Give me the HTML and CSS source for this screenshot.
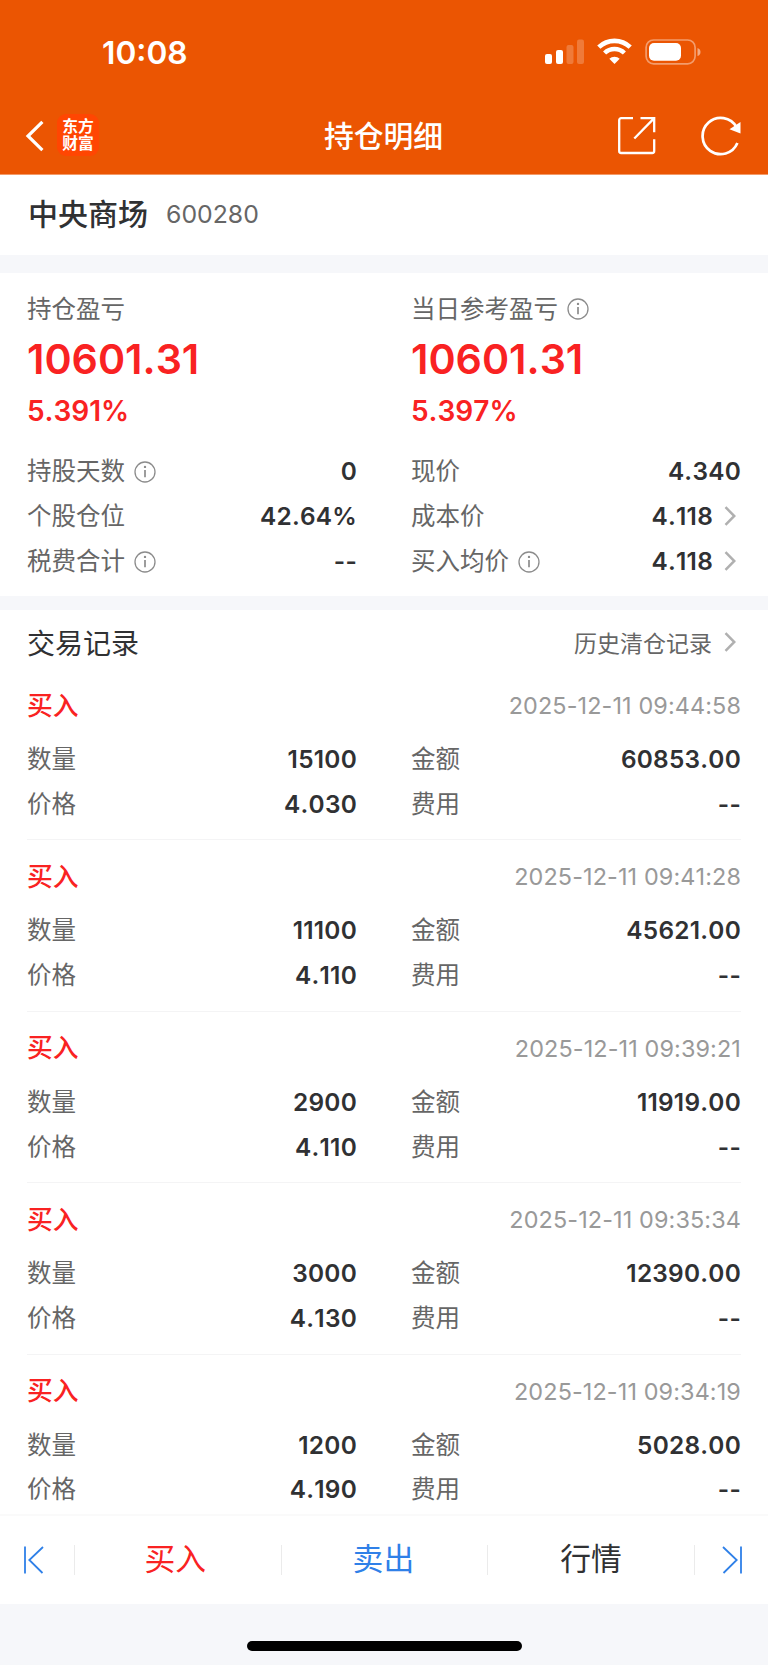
FILE: index.html
```html
<!DOCTYPE html>
<html lang="zh-CN">
  <head>
    <meta charset="UTF-8" />
    <meta name="viewport" content="width=device-width, initial-scale=1.0" />
    <title>持仓明细</title>
    <link rel="stylesheet" href="styles.css">
  </head>
  <body>
    <svg class="defs" width="0" height="0">
      <symbol id="info" viewBox="0 0 22 22">
        <circle cx="11" cy="11" r="10" fill="none" stroke="#8c8c8c" stroke-width="1.3" />
        <path d="M11 9v7.2" stroke="#8c8c8c" stroke-width="1.7" />
        <circle cx="11" cy="5.9" r="1.2" fill="#8c8c8c" />
      </symbol>
      <symbol id="arrow" viewBox="0 0 12 20">
        <path d="M1.5 1.2L10.3 10L1.5 18.8" fill="none" stroke="#b0b0b0" stroke-width="2.5" />
      </symbol>
    </svg>

    <div class="page">
      <header class="header">
        <div class="status-bar">
          <div class="time">10:08</div>
          <svg class="status-icons" width="158" height="28" viewBox="0 0 158 28">
            <rect x="1" y="16" width="7" height="10" rx="2" fill="#fff" />
            <rect x="12" y="12" width="7" height="14" rx="2" fill="#fff" />
            <rect x="22.5" y="7" width="7" height="19" rx="2" fill="#fff" fill-opacity="0.22" />
            <rect x="33" y="1.5" width="7" height="24.5" rx="2" fill="#fff" fill-opacity="0.22" />
            <path d="M54.8 9.2A22.6 22.6 0 0 1 86.2 9.2" fill="none" stroke="#fff" stroke-width="4.6" />
            <path d="M60.6 15A14.2 14.2 0 0 1 80.4 15" fill="none" stroke="#fff" stroke-width="4.4" />
            <path d="M70.5 26L65.3 20.8A7.6 7.6 0 0 1 75.7 20.8Z" fill="#fff" />
            <rect x="102.1" y="2" width="49" height="23.8" rx="7.5" fill="none" stroke="#fff" stroke-opacity="0.42" stroke-width="1.7" />
            <rect x="105" y="5" width="32" height="17.8" rx="5" fill="#fff" />
            <path d="M153.5 10Q156.5 11 156.5 14T153.5 18Z" fill="#fff" fill-opacity="0.5" />
          </svg>
        </div>
        <div class="nav">
          <div class="nav-left">
            <svg width="20" height="32" viewBox="0 0 20 32">
              <path d="M17.4 1.8L3 16L17.4 30.2" fill="none" stroke="#fff" stroke-width="3.2" />
            </svg>
            <div class="logo"><span>东方</span><span>财富</span></div>
          </div>
          <h1>持仓明细</h1>
          <div class="nav-right">
            <svg width="40" height="40" viewBox="0 0 40 40">
              <path d="M16 2.2H4.2a2 2 0 0 0-2 2V35a2 2 0 0 0 2 2H35.2a2 2 0 0 0 2-2V23.3M23.5 2.2H37.2V16.3M37 2.4L17.3 22.5" fill="none" stroke="#fff" stroke-width="2.3" />
            </svg>
            <svg width="42" height="40" viewBox="0 0 42 40">
              <path d="M37.4 27A18.1 18.1 0 1 1 36.5 11.2" fill="none" stroke="#fff" stroke-width="2.7" />
              <path d="M40.5 6V17.5L29.5 13.3Z" fill="#fff" />
            </svg>
          </div>
        </div>
      </header>

      <section class="stock">
        <span class="stock-name">中央商场</span>
        <span class="stock-code">600280</span>
      </section>

      <section class="summary">
        <div class="col">
          <div class="label">持仓盈亏</div>
          <div class="profit">10601.31</div>
          <div class="percent">5.391%</div>
          <div class="row"><span class="label">持股天数<svg class="info"><use href="#info" /></svg></span><b>0</b></div>
          <div class="row"><span class="label">个股仓位</span><b>42.64%</b></div>
          <div class="row"><span class="label">税费合计<svg class="info"><use href="#info" /></svg></span><b>--</b></div>
        </div>
        <div class="col">
          <div class="label">当日参考盈亏<svg class="info"><use href="#info" /></svg></div>
          <div class="profit">10601.31</div>
          <div class="percent">5.397%</div>
          <div class="row"><span class="label">现价</span><b>4.340</b></div>
          <div class="row"><span class="label">成本价</span><b>4.118<svg class="arrow"><use href="#arrow" /></svg></b></div>
          <div class="row"><span class="label">买入均价<svg class="info"><use href="#info" /></svg></span><b>4.118<svg class="arrow"><use href="#arrow" /></svg></b></div>
        </div>
      </section>

      <section class="records">
        <div class="records-title">
          <h2>交易记录</h2>
          <a class="history">历史清仓记录<svg class="arrow"><use href="#arrow" /></svg></a>
        </div>

        <div class="record">
          <div class="record-head"><span class="buy">买入</span><span class="date">2025-12-11 09:44:58</span></div>
          <div class="record-grid">
            <div class="row"><span class="label">数量</span><b>15100</b></div>
            <div class="row"><span class="label">金额</span><b>60853.00</b></div>
            <div class="row"><span class="label">价格</span><b>4.030</b></div>
            <div class="row"><span class="label">费用</span><b>--</b></div>
          </div>
        </div>

        <div class="record">
          <div class="record-head"><span class="buy">买入</span><span class="date">2025-12-11 09:41:28</span></div>
          <div class="record-grid">
            <div class="row"><span class="label">数量</span><b>11100</b></div>
            <div class="row"><span class="label">金额</span><b>45621.00</b></div>
            <div class="row"><span class="label">价格</span><b>4.110</b></div>
            <div class="row"><span class="label">费用</span><b>--</b></div>
          </div>
        </div>

        <div class="record">
          <div class="record-head"><span class="buy">买入</span><span class="date">2025-12-11 09:39:21</span></div>
          <div class="record-grid">
            <div class="row"><span class="label">数量</span><b>2900</b></div>
            <div class="row"><span class="label">金额</span><b>11919.00</b></div>
            <div class="row"><span class="label">价格</span><b>4.110</b></div>
            <div class="row"><span class="label">费用</span><b>--</b></div>
          </div>
        </div>

        <div class="record">
          <div class="record-head"><span class="buy">买入</span><span class="date">2025-12-11 09:35:34</span></div>
          <div class="record-grid">
            <div class="row"><span class="label">数量</span><b>3000</b></div>
            <div class="row"><span class="label">金额</span><b>12390.00</b></div>
            <div class="row"><span class="label">价格</span><b>4.130</b></div>
            <div class="row"><span class="label">费用</span><b>--</b></div>
          </div>
        </div>

        <div class="record">
          <div class="record-head"><span class="buy">买入</span><span class="date">2025-12-11 09:34:19</span></div>
          <div class="record-grid">
            <div class="row"><span class="label">数量</span><b>1200</b></div>
            <div class="row"><span class="label">金额</span><b>5028.00</b></div>
            <div class="row"><span class="label">价格</span><b>4.190</b></div>
            <div class="row"><span class="label">费用</span><b>--</b></div>
          </div>
        </div>
      </section>

      <footer class="tabs">
        <div class="tab-side">
          <svg width="22" height="28" viewBox="0 0 22 28">
            <path d="M2 .5V27.5M20 1L6.3 14L19.5 27" fill="none" stroke="#2f80e8" stroke-width="1.8" />
          </svg>
        </div>
        <div class="tab tab-buy">买入</div>
        <div class="tab tab-sell">卖出</div>
        <div class="tab">行情</div>
        <div class="tab-side tab-next">
          <svg width="22" height="28" viewBox="0 0 22 28">
            <path d="M20 .5V27.5M2 1L15.7 14L2.5 27" fill="none" stroke="#2f80e8" stroke-width="1.8" />
          </svg>
        </div>
      </footer>
      <div class="home"><div class="home-bar"></div></div>
    </div>
  </body>
</html>
```
FILE: styles.css
```css
* {
  box-sizing: border-box;
}

body {
  margin: 0;
  font-family: Inter, "Noto Sans CJK SC", sans-serif;
  font-kerning: none;
  color: #303133;
  background: #f6f7fa;
}

.defs {
  display: none;
}

.page {
  width: 768px;
  height: 1665px;
  display: flex;
  flex-direction: column;
  overflow: hidden;
}

/* header */
.header {
  height: 175px;
  flex: none;
  background: #eb5502;
  border-bottom: 1px solid #f39a68;
  color: #fff;
}

.status-bar {
  height: 98px;
  padding: 6px 66px 0 102px;
  display: flex;
  align-items: center;
  justify-content: space-between;
}

.time {
  font-size: 31.7px;
  font-weight: 600;
}

.nav {
  height: 76px;
  padding: 0 26px 0 25px;
  display: grid;
  grid-template-columns: 1fr auto 1fr;
  align-items: center;
}

.nav-left {
  display: flex;
  align-items: center;
  gap: 12px;
}

.nav-left svg {
  margin-bottom: 1px;
}

.logo {
  width: 42px;
  height: 42px;
  margin-bottom: 2px;
  padding-bottom: 2px;
  border-radius: 9px;
  background: #ff4602;
  display: flex;
  flex-direction: column;
  align-items: center;
  justify-content: center;
  font-family: "Noto Sans CJK SC", sans-serif;
  font-size: 15.8px;
  font-weight: 700;
  line-height: 17.5px;
}

.nav h1 {
  margin: 0;
  padding-bottom: 4px;
  font-size: 29.8px;
  font-weight: 500;
}

.nav-right {
  display: flex;
  justify-content: flex-end;
  gap: 43px;
}

/* stock name */
.stock {
  height: 80px;
  flex: none;
  padding: 0 28px;
  display: flex;
  align-items: center;
  gap: 18px;
  background: #fff;
}

.stock-name {
  padding-bottom: 6px;
  font-size: 30px;
  font-weight: 500;
}

.stock-code {
  padding-bottom: 2px;
  font-size: 24.8px;
  color: #666;
}

/* summary */
.summary {
  height: 323px;
  flex: none;
  margin: 18px 0 14px;
  padding: 14px 27px;
  display: grid;
  grid-template-columns: 330px 330px;
  column-gap: 54px;
  background: #fff;
}

.label {
  display: flex;
  align-items: center;
  font-size: 24.5px;
  line-height: 45px;
  color: #666;
}

.row .label {
  padding-top: 1px;
}

.info {
  width: 22px;
  height: 22px;
  margin-left: 9px;
}

.col > .label .info {
  margin-bottom: 2px;
}

.arrow {
  width: 12px;
  height: 20px;
  margin: 0 5px 0 12px;
}

.row .arrow {
  margin-left: 11px;
}

.profit {
  height: 54px;
  line-height: 54px;
  font-size: 41.2px;
  font-weight: 600;
  color: #f92222;
}

.percent {
  height: 50px;
  margin-bottom: 13px;
  line-height: 50px;
  font-size: 28px;
  font-weight: 600;
  color: #f92222;
}

.row {
  height: 44.8px;
  display: flex;
  align-items: center;
  justify-content: space-between;
}

.row b {
  display: flex;
  align-items: center;
  font-size: 24.4px;
  font-weight: 600;
  letter-spacing: 0.25px;
}

/* trade records */
.records {
  height: 904px;
  flex: none;
  padding: 0 27px;
  overflow: hidden;
  background: #fff;
}

.records-title {
  height: 59px;
  padding-top: 4px;
  display: flex;
  align-items: center;
  justify-content: space-between;
}

.records-title h2 {
  margin: 0;
  font-size: 28px;
  font-weight: 400;
}

.history {
  display: flex;
  align-items: center;
  font-size: 23px;
  color: #666;
}

.record {
  height: 171.4px;
  padding-top: 14px;
  border-bottom: 1px solid #f4f4f5;
}

.record-head {
  height: 45px;
  margin-bottom: 8.7px;
  display: flex;
  align-items: center;
  justify-content: space-between;
}

.buy {
  padding-bottom: 5px;
  font-size: 25.8px;
  font-weight: 500;
  color: #f92222;
}

.date {
  font-size: 23.4px;
  letter-spacing: 0.12px;
  color: #999;
}

.record-grid {
  display: grid;
  grid-template-columns: 330px 330px;
  column-gap: 54px;
}

/* bottom tabs */
.tabs {
  height: 90px;
  flex: none;
  display: flex;
  align-items: center;
  border-top: 2px solid #fafafa;
  background: #fff;
}

.tab,
.tab-side {
  height: 30px;
  display: flex;
  align-items: center;
}

.tab {
  width: 206.6px;
  padding-bottom: 2px;
  justify-content: center;
  border-left: 1px solid #ebebeb;
  font-size: 30.8px;
  line-height: 26px;
}

.tab-side {
  width: 74px;
  padding-left: 23px;
}

.tab-next {
  padding-left: 26px;
  border-left: 1px solid #ebebeb;
}

.tab-buy {
  padding-right: 5px;
  color: #f92222;
}

.tab-sell {
  padding-right: 2px;
  color: #2f80e8;
}

.home {
  flex: 1;
  padding-top: 37px;
}

.home-bar {
  width: 275px;
  height: 10px;
  margin: 0 auto;
  border-radius: 5px;
  background: #000;
}
```
